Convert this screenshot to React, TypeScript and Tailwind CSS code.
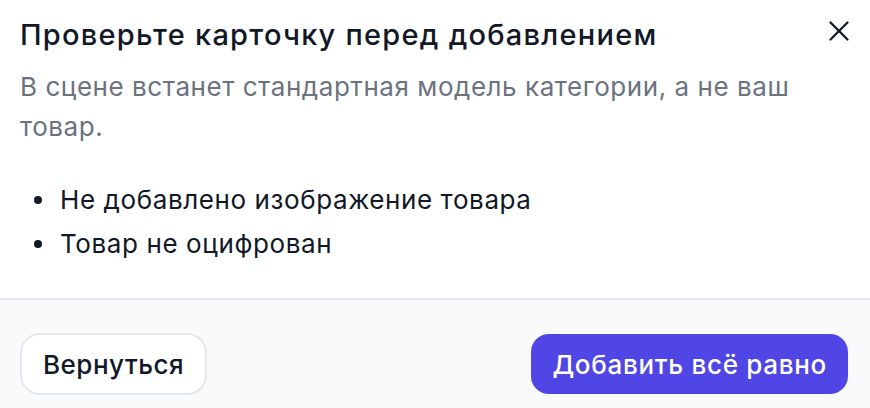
import { X } from "lucide-react";

// Pre-add check dialog: warns that the scene will use the category's default
// model instead of the product itself, and lists what is missing on the card.

const issues = ["Не добавлено изображение товара", "Товар не оцифрован"];

export default function App() {
  return (
    <div
      className="flex h-[408px] w-full flex-col overflow-hidden bg-white"
      style={{ fontFamily: "Inter, 'Noto Sans', sans-serif" }}
    >
      <div className="px-5 pt-[17px]">
        <div className="flex items-start justify-between">
          <h2 className="text-[29px] leading-[36px] font-medium tracking-[1.25px] text-[#111827]">
            Проверьте карточку перед добавлением
          </h2>
          <button className="-mt-[3px] -mr-[6px] text-[#111827]">
            <X size={34} strokeWidth={1.6} />
          </button>
        </div>

        <p className="mt-[14px] max-w-[800px] text-[26px] leading-[40px] tracking-[0.55px] text-[#6b7280]">
          В сцене встанет стандартная модель категории, а не ваш товар.
        </p>

        <ul className="mt-[33px] space-y-[4px] pl-[14px]">
          {issues.map((issue) => (
            <li
              key={issue}
              className="flex items-center gap-[18px] text-[26px] leading-[40px] tracking-[0.6px] text-[#111827]"
            >
              <span className="h-[8px] w-[8px] shrink-0 rounded-full bg-[#111827]" />
              {issue}
            </li>
          ))}
        </ul>
      </div>

      <div className="mt-auto flex h-[110px] items-start justify-between border-t-2 border-[#e5e7eb] bg-[#f9fafb] pl-5 pr-[22px] pt-[33px]">
        <button className="h-[62px] rounded-[20px] border-2 border-[#e5e7eb] bg-white px-[21px] text-[26px] font-medium tracking-[0.5px] text-[#111827]">
          Вернуться
        </button>
        <button className="mt-[1px] h-[60px] rounded-[18px] bg-[#4f46e5] px-[21px] text-[26px] font-medium tracking-[0.7px] text-white">
          Добавить всё равно
        </button>
      </div>
    </div>
  );
}
